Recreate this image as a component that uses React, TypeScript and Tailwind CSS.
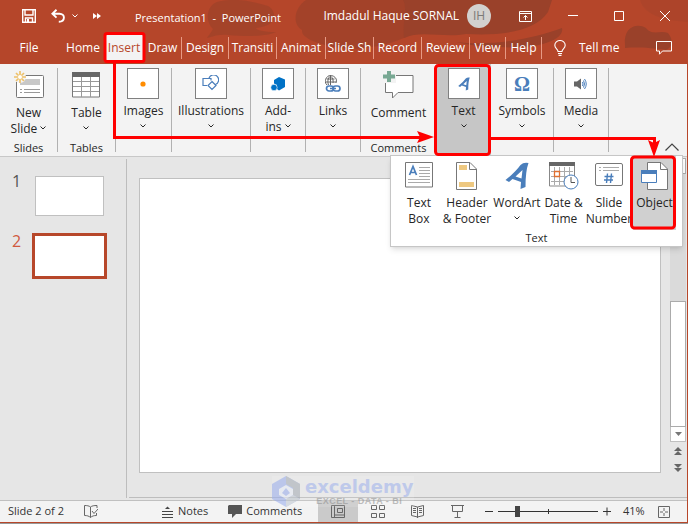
import { ReactNode } from "react";

const TABS = [
  { label: "Home", width: "w-[42px]" },
  { label: "Insert", width: "w-10", active: true },
  { label: "Draw", width: "w-[38px]", divider: true },
  { label: "Design", width: "w-[47px]", divider: true },
  { label: "Transiti", width: "w-12", divider: true },
  { label: "Animat", width: "w-[49px]", divider: true },
  { label: "Slide Sh", width: "w-12", divider: true },
  { label: "Record", width: "w-12", divider: true },
  { label: "Review", width: "w-12", divider: true },
  { label: "View", width: "w-9", divider: true },
  { label: "Help", width: "w-9", divider: true },
];

function Chevron({ className = "" }: { className?: string }) {
  return (
    <svg className={`inline-block ${className}`} width="6" height="4" viewBox="0 0 6 4" fill="none" stroke="currentColor" strokeWidth="1">
      <path d="M0.5 0.5 3 3 5.5 0.5" />
    </svg>
  );
}

function HeaderArt() {
  return (
    <svg className="absolute inset-0 h-full w-full" viewBox="0 0 688 64" preserveAspectRatio="xMaxYMin slice">
      <rect width="688" height="64" fill="#b5462a" />
      <g fill="#9a412a">
        <path d="M217 2C206 6 205 22 213 29 211 33 208 36 207 38 216 35 222 34 228 35 250 37 268 36 276 32 264 32 256 30 256 28 280 26 276 10 268 6 250 0 230-2 217 2Z" opacity=".6" />
        <path d="M306 0C294 8 292 24 302 30 300 40 330 48 352 49 376 48 398 42 412 34 420 26 424 12 422 0Z" opacity=".65" />
        <path d="M403 0C408 8 402 22 404 38 420 30 444 38 466 34 500 36 535 32 548 12L552 0Z" />
        <path d="M456 42C490 46 530 40 562 28 565 40 536 50 500 47 484 47 468 45 456 42Z" />
        <path d="M625 45C623 28 636 22 646 28 652 36 660 30 668 33 674 40 672 48 666 50 650 48 640 47 625 48Z" />
        <path d="M640 0C644 14 660 20 688 22L688 0Z" opacity=".3" />
      </g>
    </svg>
  );
}

function TitleBar() {
  return (
    <div className="relative flex h-8 items-center text-white">
      <div className="flex w-[135px] items-center pl-[22px]">
        <button aria-label="Save">
          <svg width="14" height="14" viewBox="0 0 14 14" fill="none" stroke="#fff" strokeWidth="1.4">
            <path d="M0.7 0.7H13.3V13.3H0.7ZM3 1V6H11V1M3.5 13V9H10.5V13" />
            <path d="M5 11.5H7" strokeWidth="3" />
          </svg>
        </button>
        <button aria-label="Undo" className="ml-[15px]">
          <svg width="14" height="14" viewBox="0 0 14 14" fill="none" stroke="#fff" strokeWidth="1.9">
            <path d="M5.5 0.8 1.4 4.7 5.5 8.6M1.4 4.7H8.5C14.5 4.7 14.5 12.7 7.8 12.7" />
          </svg>
        </button>
        <button aria-label="Undo options" className="ml-[7px] flex"><Chevron /></button>
        <button aria-label="More commands" className="ml-[15px] flex">
          <svg width="8" height="6" viewBox="0 0 8 6" fill="#fff"><path d="M0 0 4 3 0 6ZM4 0 8 3 4 6Z" /></svg>
        </button>
      </div>
      <h1 className="whitespace-pre pt-1 text-[11px]">Presentation1  -  PowerPoint</h1>
      <div className="ml-auto flex items-center">
        <span className="whitespace-nowrap text-xs">Imdadul Haque SORNAL</span>
        <span className="ml-2 flex h-6 w-6 items-center justify-center rounded-full bg-[#d2d0ce] text-xs text-[#7b7976]">IH</span>
        <button aria-label="Ribbon display options" className="ml-7">
          <svg width="13" height="11" viewBox="0 0 13 11" fill="none" stroke="#fff">
            <path d="M0.5 0.5H12.5V10.5H0.5ZM0.5 2.5H12.5M6.5 9V4.5M4.5 6.5 6.5 4.5 8.5 6.5" />
          </svg>
        </button>
        <button aria-label="Minimize" className="ml-9"><svg width="10" height="10" stroke="#fff"><path d="M0 4.5H10" /></svg></button>
        <button aria-label="Maximize" className="ml-9"><svg width="10" height="10" fill="none" stroke="#fff"><path d="M0.5 0.5H9.5V9.5H0.5Z" /></svg></button>
        <button aria-label="Close" className="ml-9 mr-[18px]"><svg width="10" height="10" fill="none" stroke="#fff"><path d="M0 0 10 10M10 0 0 10" /></svg></button>
      </div>
    </div>
  );
}

function TabBar() {
  return (
    <nav className="relative flex h-8 items-center text-xs text-white">
      <button className="w-[62px] shrink-0 pr-1 text-center">File</button>
      {TABS.map((t) => (
        <div
          key={t.label}
          className={`flex h-[22px] shrink-0 items-center justify-center ${t.width} ${t.divider ? "border-r border-[#e79a85]" : ""}`}
        >
          <button className={t.active ? "h-7 w-full bg-[#f3f3f3] text-[#b7472a]" : "whitespace-nowrap"}>
            {t.label}
          </button>
        </div>
      ))}
      <button className="ml-3 flex items-center gap-[13px] whitespace-nowrap">
        <svg width="12" height="16" viewBox="0 0 12 16" fill="none" stroke="#fff" strokeWidth="1.1">
          <path d="M4 11.5C4 9 .8 8.5.8 5.3A5.2 4.8 0 0 1 11.2 5.3C11.2 8.5 8 9 8 11.5ZM4 13.5H8M4.5 15.4H7.5" />
        </svg>
        Tell me
      </button>
      <button aria-label="Comments" className="ml-auto mr-4">
        <svg width="16" height="14" viewBox="0 0 16 14" fill="none" stroke="#fff"><path d="M.5.5H15.5V10H6.5L3.5 13.2V10H.5Z" /></svg>
      </button>
    </nav>
  );
}

interface GroupProps {
  width: string;
  label: ReactNode;
  icon: ReactNode;
  footer?: string;
  boxed?: boolean;
  chevron?: boolean;
  divider?: boolean;
  active?: boolean;
}

function Group({ width, label, icon, footer, boxed, chevron, divider = true, active }: GroupProps) {
  return (
    <div className={`flex shrink-0 flex-col items-center pt-1 ${width} ${active ? "bg-[#c6c6c6]" : ""}`}>
      <div className={`flex h-[84px] w-full flex-col items-center ${divider ? "border-r border-[#b1b1b1]" : ""}`}>
        <button className="flex flex-col items-center">
          {boxed ? (
            <span className="flex h-[31px] w-8 items-center justify-center border border-[#808080] bg-white">{icon}</span>
          ) : (
            <span className="flex h-[33px] items-center">{icon}</span>
          )}
          <span className="mt-1 text-center text-xs leading-4">{label}</span>
          {chevron && <Chevron className="mt-[5px]" />}
        </button>
        {footer && <span className="-mb-1 mt-auto text-[11px] leading-4">{footer}</span>}
      </div>
    </div>
  );
}

const WordArtGlyph = ({ size }: { size: number }) => (
  <svg width={size} height={size} viewBox="0 0 25 28" fill="#4a7ebb" fillRule="evenodd">
    <path d="M1 18Q11 10 16 3 19 0 24 1 21 9 21 25L16 27 16.5 20 8 17 4.500 20ZM11 14.500 17 16.500 18 8Z" />
  </svg>
);

function NewSlideIcon() {
  return (
    <svg width="30" height="29" viewBox="0 0 30 29" fill="none">
      <rect x="2.5" y="5.5" width="27" height="22" rx="1" fill="#fff" stroke="#777" />
      <path d="M6 9H26V15H6Z" fill="#c8c8c8" />
      <path d="M6 19.500H8M10 19.500H26M6 22.500H8M10 22.500H26" stroke="#999" />
      <circle cx="6" cy="7" r="6" fill="#f3f3f3" />
      <path d="M6 1V13M0 7H12M2 3 10 11M10 3 2 11" stroke="#eec16a" strokeWidth="1.700" />
      <circle cx="6" cy="7" r="2" fill="#fff" />
    </svg>
  );
}

function TableIcon() {
  return (
    <svg width="28" height="26" viewBox="0 0 28 26" fill="none">
      <path d="M.5.5H27.500V25H.5Z" fill="#fff" stroke="#777" />
      <path d="M0 0H28V5H0Z" fill="#666" />
      <path d="M1 9.500H27M1 14.500H27M1 19.500H27M9.500 5V25M18.500 5V25" stroke="#999" />
    </svg>
  );
}

function Ribbon() {
  return (
    <section className="flex h-[93px] border-b border-[#c8c8c8] bg-[#f3f3f3] text-[#262626]">
      <Group width="w-[58px]" icon={<NewSlideIcon />} label={<>New<br />Slide <Chevron className="mb-[3px]" /></>} footer="Slides" />
      <Group width="w-[58px]" icon={<TableIcon />} label="Table" chevron footer="Tables" />
      <Group width="w-14" boxed chevron label="Images" icon={<svg width="6" height="6"><circle cx="3" cy="3" r="2.6" fill="#ff8c00" /></svg>} />
      <Group
        width="w-[79px]" boxed chevron label="Illustrations"
        icon={
          <svg width="17" height="17" viewBox="0 0 17 17" fill="none" stroke="#4a7ebb" strokeWidth="1.2">
            <path d="M5 10.500H1V3.500H9V5.500M7 3A5 5 0 1 1 13.500 9.500M10 6.500 14 10.500 10 14.500 6 10.500Z" />
          </svg>
        }
      />
      <Group
        width="w-[55px]" boxed label={<>Add-<br />ins <Chevron className="mb-[3px]" /></>}
        icon={
          <svg width="16" height="16" viewBox="0 0 16 16" fill="#0072c6">
            <path d="M9 1 15 3.500V11L9 14.500 7 13V9L4 7.500V4Z" />
            <circle cx="4" cy="11.500" r="3.200" stroke="#fff" strokeWidth=".6" />
          </svg>
        }
      />
      <Group
        width="w-[55px]" boxed chevron label="Links"
        icon={
          <svg width="16" height="18" viewBox="0 0 16 18" fill="none">
            <path d="M11 8A5.500 5.500 0 1 0 2 10M0 7H11M1.500 4H9.500M5.500 1V10M5.500 1C2.500 3 2.500 7 3.500 10M5.500 1C8 3 8.500 6 8 8" stroke="#666" />
            <rect x="1.500" y="11" width="7" height="5" rx="2.500" stroke="#4a7ebb" strokeWidth="1.700" />
            <rect x="8" y="11" width="7" height="5" rx="2.500" stroke="#4a7ebb" strokeWidth="1.700" />
            <path d="M5 13.500H11" stroke="#4a7ebb" strokeWidth="1.500" />
          </svg>
        }
      />
      <Group
        width="w-[75px]" divider={false} label="Comment" footer="Comments"
        icon={
          <svg width="31" height="30" viewBox="0 0 31 30" fill="none">
            <path d="M2.500 5.500H30V22.500H15L9.500 28V22.500H2.500Z" fill="#fff" stroke="#777" />
            <path d="M0 0H13V13H0Z" fill="#f3f3f3" />
            <path d="M6 1V12M0 6.500H12" stroke="#78a893" strokeWidth="4" />
          </svg>
        }
      />
      <Group width="w-[55px]" boxed chevron active divider={false} label="Text" icon={<WordArtGlyph size={14} />} />
      <Group width="w-[63px]" boxed chevron label="Symbols" icon={<span className="font-['Liberation_Serif'] text-xl font-bold text-[#4a7ebb]">Ω</span>} />
      <Group
        width="w-[55px]" boxed chevron label="Media"
        icon={
          <svg width="13" height="12" viewBox="0 0 13 12" fill="none">
            <path d="M0 3.500H3L7 .5V11.500L3 8.500H0Z" fill="#666" />
            <path d="M8.500 4Q9.500 6 8.500 8M9.500 2.500Q11.500 6 9.500 9.500M10.500 1Q14 6 10.500 11" stroke="#4a7ebb" />
          </svg>
        }
      />
      <button aria-label="Collapse the ribbon" className="mb-[5px] ml-auto mr-2 self-end">
        <svg width="14" height="8" viewBox="0 0 14 8" fill="none" stroke="#444" strokeWidth="1.200"><path d="M.5 7.500 7 1 13.500 7.500" /></svg>
      </button>
    </section>
  );
}

const MENU_ITEMS = [
  {
    label: <>Text<br />Box</>,
    width: "w-[46px]",
    icon: (
      <svg width="28" height="26" viewBox="0 0 28 26" fill="none">
        <path d="M.5.5H27.500V25H.5Z" stroke="#777" fill="#fff" />
        <path d="M14 5.500H25M14 8.500H25M14 11.500H25M14 14.500H25M3 17.500H25M3 20.500H25" stroke="#aaa" />
        <path d="M4.500 13 8 4.500 11.500 13M5.500 10.500H10.500" stroke="#4a7ebb" strokeWidth="1.700" />
      </svg>
    ),
  },
  {
    label: <>Header<br />&amp; Footer</>,
    width: "w-[50px]",
    icon: (
      <svg width="22" height="28" viewBox="0 0 22 28" fill="none">
        <path d="M.5.5H14L20.500 7V27.500H.5Z" fill="#fff" stroke="#777" />
        <path d="M13.500 .5V7.500H20.500" stroke="#777" />
        <path d="M3 3H11V8H3ZM3 20H18V25H3Z" fill="#eec880" />
      </svg>
    ),
  },
  { label: <>WordArt</>, width: "w-[50px]", icon: <WordArtGlyph size={28} />, chevron: true },
  {
    label: <>Date &amp;<br />Time</>,
    width: "w-[43px]",
    icon: (
      <svg width="30" height="28" viewBox="0 0 30 28" fill="none">
        <path d="M.5.5H25.500V24H.5Z" stroke="#888" fill="#fff" />
        <path d="M0 0H26V4H0Z" fill="#666" />
        <path d="M2 9.500H24M2 14.500H24M2 19.500H24M5.500 5V23M10.500 5V23M15.500 5V23M20.500 5V23" stroke="#aaa" />
        <path d="M5.500 9.500H10.500V14.500H5.500Z" stroke="#e07030" strokeWidth="1.300" />
        <circle cx="22" cy="20" r="7" fill="#fff" stroke="#4a7ebb" />
        <path d="M22 15V20.500H26" stroke="#555" />
      </svg>
    ),
  },
  {
    label: <>Slide<br />Number</>,
    width: "w-[48px]",
    icon: (
      <svg width="28" height="25" viewBox="0 0 28 25" fill="none">
        <rect x=".5" y="1.500" width="27" height="22" rx="1.500" stroke="#777" fill="#fff" />
        <path d="M4 5.500H6M8 5.500H24M4 8.500H6M8 8.500H24" stroke="#aaa" />
        <path d="M12.500 11.500 11.500 21M16.500 11.500 15.500 21M9.500 14.500H18.500M9 18H18" stroke="#4a7ebb" strokeWidth="1.400" />
      </svg>
    ),
  },
  {
    label: <>Object</>,
    width: "w-[43px]",
    active: true,
    icon: (
      <svg width="28" height="28" viewBox="0 0 28 28" fill="none">
        <path d="M6.500 .5H20L26.500 7V27.500H6.500Z" fill="#fff" stroke="#777" />
        <path d="M19.500 .5V7.500H26.500" stroke="#777" />
        <path d="M.5 8.500H15.500V20.500H.5Z" fill="#fff" stroke="#4a7ebb" />
        <path d="M0 8H16V12H0Z" fill="#4a7ebb" />
      </svg>
    ),
  },
];

function TextMenu() {
  return (
    <div className="absolute right-[5px] top-[155px] z-10 border border-[#c6c6c6] bg-white text-[#262626] shadow-md">
      <div className="flex pl-[5px] pr-[6px]">
        {MENU_ITEMS.map((item, i) => (
          <button key={i} className={`flex h-[74px] flex-col items-center whitespace-nowrap pt-[6px] ${item.width} ${item.active ? "bg-[#d0d0d0]" : ""}`}>
            <span className="flex h-8 items-start">{item.icon}</span>
            <span className="mt-px text-xs leading-4">{item.label}</span>
            {item.chevron && <Chevron className="mt-[5px]" />}
          </button>
        ))}
      </div>
      <p className="text-center text-[11px] leading-4">Text</p>
    </div>
  );
}

function Highlights() {
  return (
    <svg className="pointer-events-none absolute left-0 top-0 z-20" width="688" height="240" viewBox="0 0 688 240" fill="none" stroke="#f00" strokeWidth="3">
      <rect x="105" y="33.500" width="39" height="28" rx="2" />
      <path d="M114.500 60V137.500H420M490 138.500H654.500V144" />
      <rect x="435.500" y="65.500" width="54" height="89" rx="3" />
      <rect x="631.500" y="157" width="43" height="71" rx="3" />
      <path d="M417 131 434 137 417 143 420 137ZM648 140 654 157 660 140 654 143Z" fill="#f00" stroke="none" />
    </svg>
  );
}

function Workspace() {
  return (
    <main className="flex flex-1 bg-[#e6e6e6]">
      <aside className="mb-[2px] mt-[2px] w-[127px] shrink-0 border-r border-[#bdbdbd] pl-3 pt-[14px]">
        <ol>
          <li className="flex h-[60px] text-base leading-4 text-[#555]">
            <span className="w-[23px]">1</span>
            <button aria-label="Slide 1" className="mt-[3px] h-10 w-[69px] border border-[#c0c0c0] bg-white" />
          </li>
          <li className="flex text-base leading-4 text-[#d0593e]">
            <span className="w-5">2</span>
            <button aria-label="Slide 2" className="h-[46px] w-[75px] border-[3px] border-[#b7472a] bg-white" />
          </li>
        </ol>
      </aside>
      <div className="flex flex-1 flex-col">
        <div className="flex flex-1">
          <div className="mb-6 ml-3 mr-[9px] mt-[21px] flex-1 border border-[#c0c0c0] bg-white" />
          <div className="mr-px flex w-4 flex-col items-center">
            <div className="mt-px h-4 w-full border border-[#ababab] bg-white" />
            <div className="w-full flex-1 bg-[#dadada]" />
            <div className="h-[126px] w-full border border-[#ababab] bg-white" />
            <button aria-label="Scroll down" className="flex h-[15px] w-full items-center justify-center border border-t-0 border-[#c0c0c0] bg-white">
              <svg width="7" height="4" fill="#777"><path d="M0 0H7L3.500 4Z" /></svg>
            </button>
            <button aria-label="Previous slide" className="mt-[5px]"><svg width="8" height="9" fill="#666"><path d="M4 0 8 4H0ZM4 4 8 8H0Z" /></svg></button>
            <button aria-label="Next slide" className="mb-6 mt-2"><svg width="8" height="9" fill="#666"><path d="M0 0H8L4 4ZM0 4H8L4 8Z" /></svg></button>
          </div>
        </div>
        <div className="mb-[2px] ml-[2px] h-px bg-[#bdbdbd]" />
      </div>
    </main>
  );
}

function Watermark() {
  return (
    <div className="pointer-events-none absolute bottom-4 left-[272px] z-10 flex items-center gap-[5px] bg-white/20 pr-px opacity-60">
      <svg width="28" height="31" viewBox="0 0 28 31">
        <path d="M14 0 28 8V23L14 31 0 23V8Z" fill="#9fb2ee" />
        <path d="M14 0 28 8V23L21 19V12L14 8Z" fill="#a9b0b8" />
        <path d="M14 31 28 23 21 19 14 23Z" fill="#c3cad2" />
        <path d="M14 9 21 13V19L14 23 7 19V13Z" fill="#e8edf8" />
        <path d="M14 12 18 17 14 20 10 17Z" fill="#9fb2ee" />
      </svg>
      <div className="text-center font-['DejaVu_Sans',sans-serif]">
        <p className="text-lg font-bold leading-5 text-[#a5b6ee]">exceldemy</p>
        <p className="font-['Liberation_Sans',sans-serif] text-[9px] font-bold leading-[9px] tracking-wider text-[#999]">EXCEL - DATA - BI</p>
      </div>
    </div>
  );
}

function StatusBar() {
  return (
    <footer className="flex h-[22px] items-center border-t border-[#c0c0c0] bg-[#f3f3f3] text-[11px] text-[#333]">
      <span className="w-[84px] pl-2">Slide 2 of 2</span>
      <button aria-label="Spelling">
        <svg width="14" height="13" viewBox="0 0 14 13" fill="none" stroke="#666"><path d="M6.500 2C5 .8 3 .5.5.5V10.500C3 10.500 5 11 6.500 12.500V2C8 .8 10 .5 13 .5V3M6.500 12.500C8 11 10 10.500 12.500 10.500V8M8 6 10 8.500 14 4" /></svg>
      </button>
      <button className="ml-16 flex items-center gap-[5px]">
        <svg width="11" height="12" viewBox="0 0 11 12" fill="none" stroke="#444"><path d="M3 3 5.500 .5 8 3Z" fill="#444" stroke="none" /><path d="M0 5.500H11M0 8.500H11M0 11.500H11" /></svg>
        Notes
      </button>
      <button className="ml-5 flex w-[90px] items-center gap-1">
        <svg width="14" height="13" viewBox="0 0 14 13" fill="#555"><path d="M1 0H14V9H8L4 13V9H0V1Z" /></svg>
        Comments
      </button>
      <button aria-label="Normal view" className="flex h-full w-10 items-center justify-center bg-[#cacaca]">
        <svg width="14" height="13" viewBox="0 0 14 13" fill="none" stroke="#666"><path d="M.5 .5H13.500V12.500H.5ZM3.500 .5V12.500M6.500 3.500H11.500V7.500H6.500ZM3.500 10H13" /></svg>
      </button>
      <button aria-label="Slide sorter" className="ml-[13px]">
        <svg width="14" height="13" viewBox="0 0 14 13" fill="none" stroke="#666"><path d="M.5 .5H5.500V4.500H.5ZM8.500 .5H13.500V4.500H8.500ZM.5 8.500H5.500V12.500H.5ZM8.500 8.500H13.500V12.500H8.500Z" /></svg>
      </button>
      <button aria-label="Reading view" className="ml-[26px]">
        <svg width="13" height="13" viewBox="0 0 13 13" fill="none" stroke="#666"><path d="M6.500 2 .5.5V10.500L6.500 12 12.500 10.500V.5ZM6.500 2V13M2 3.500H5M2 5.500H5M2 7.500H5M8 3.500H11M8 5.500H11M8 7.500H11" /></svg>
      </button>
      <button aria-label="Slide show" className="ml-[27px]">
        <svg width="13" height="13" viewBox="0 0 13 13" fill="none" stroke="#666"><path d="M0 .5H13M1.500 .5V6.500H11.500V.5M6.500 6.500V12M3.500 12.500H9.500" /></svg>
      </button>
      <div className="ml-auto flex items-center">
        <button aria-label="Zoom out"><svg width="8" height="9" stroke="#333"><path d="M0 4.500H8" /></svg></button>
        <label className="ml-[5px] flex">
          <input
            type="range" aria-label="Zoom" min={0} max={100} defaultValue={18}
            className="h-[11px] w-[100px] appearance-none bg-[linear-gradient(#333,#333),linear-gradient(#333,#333)] bg-[length:100%_1px,1px_5px] bg-center bg-no-repeat [&::-webkit-slider-thumb]:h-[11px] [&::-webkit-slider-thumb]:w-[5px] [&::-webkit-slider-thumb]:appearance-none [&::-webkit-slider-thumb]:bg-[#444]"
          />
        </label>
        <button aria-label="Zoom in" className="ml-[5px]"><svg width="8" height="9" stroke="#333"><path d="M0 4.500H8M4 .5V8.500" /></svg></button>
        <span className="ml-3 w-[22px]">41%</span>
        <button aria-label="Fit slide to window" className="ml-[13px] mr-[17px]">
          <svg width="12" height="12" viewBox="0 0 12 12" fill="none" stroke="#666"><path d="M.5 .5H11.500V11.500H.5ZM6 2V5M6 7V10M2 6H5M7 6H10" /></svg>
        </button>
      </div>
    </footer>
  );
}

export default function App() {
  return (
    <div className="relative flex min-h-screen flex-col overflow-hidden border-b border-[#999] font-['Open_Sans',sans-serif]">
      <header className="relative">
        <HeaderArt />
        <TitleBar />
        <TabBar />
      </header>
      <div className="flex flex-1 flex-col border-b border-r border-[#b7472a]">
        <Ribbon />
        <Workspace />
        <StatusBar />
      </div>
      <TextMenu />
      <Highlights />
      <Watermark />
    </div>
  );
}
